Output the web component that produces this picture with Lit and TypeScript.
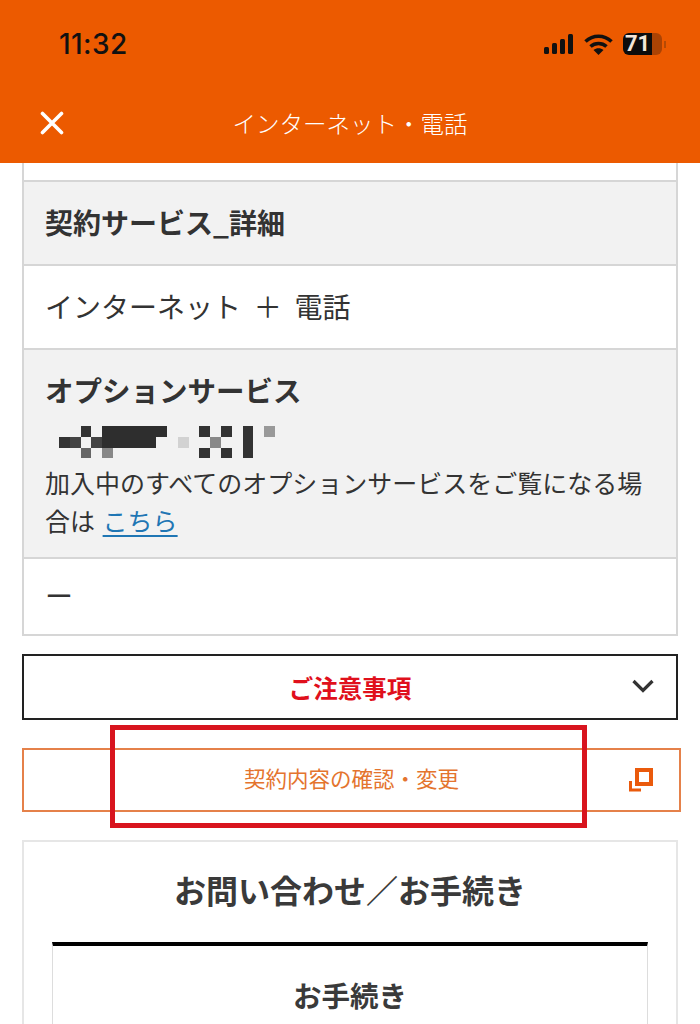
import { LitElement, css, html } from 'lit';
import { customElement } from 'lit/decorators.js';

// mosaic cells of the censored option text: [row, col, colour]
const MOSAIC: [number, number, string][] = [
  [0, 2, '#333'],
  ...[4, 5, 6, 7, 8, 9].map((c) => [0, c, '#2e2e2e'] as [number, number, string]),
  [0, 13, '#333'],
  [0, 15, '#333'],
  [0, 17, '#333'],
  [0, 19, '#999'],
  [1, 0, '#333'],
  [1, 1, '#444'],
  [1, 3, '#444'],
  ...[4, 5, 6, 7, 8].map((c) => [1, c, '#2e2e2e'] as [number, number, string]),
  [1, 11, '#d2d2d2'],
  [1, 14, '#888'],
  [1, 17, '#333'],
  [2, 2, '#666'],
  [2, 4, '#888'],
  [2, 13, '#333'],
  [2, 15, '#333'],
  [2, 17, '#333'],
];

@customElement('app-root')
export class AppRoot extends LitElement {
  render() {
    return html`
      <header class="top">
        <div class="status">
          <span class="time">11:32</span>
          <div class="status-icons">
            <svg width="30" height="20" viewBox="0 0 30 20" fill="#111">
              <rect x="0" y="13" width="5" height="7" rx="1.5"></rect>
              <rect x="8" y="9" width="5" height="11" rx="1.5"></rect>
              <rect x="16" y="5" width="5" height="15" rx="1.5"></rect>
              <rect x="24" y="0" width="5" height="20" rx="1.5"></rect>
            </svg>
            <svg width="29" height="21" viewBox="0 0 29 21" fill="none" stroke="#111" stroke-width="3.6">
              <path d="M1.5 7.5C9 .5 20 .5 27.5 7.5"></path>
              <path d="M6.5 12.5C11 8.5 18 8.5 22.5 12.5"></path>
              <path d="M14.5 21L9.5 16C12.5 13.5 16.5 13.5 19.5 16Z" fill="#111" stroke="none"></path>
            </svg>
            <div class="battery">
              <div class="battery-fill"><span>71</span></div>
              <div class="battery-rest"></div>
              <div class="battery-nub"></div>
            </div>
          </div>
        </div>
        <div class="nav">
          <svg class="close" width="26" height="24" viewBox="0 0 26 24" stroke="#fff" stroke-width="3.6" stroke-linecap="round">
            <path d="M3.5 2.5L22.5 21.5M22.5 2.5L3.5 21.5"></path>
          </svg>
          <span class="nav-title">インターネット・電話</span>
        </div>
      </header>

      <main class="page">
        <section class="table">
          <div class="row stub"></div>
          <div class="row head"><h3>契約サービス_詳細</h3></div>
          <div class="row cell">インターネット ＋ 電話</div>
          <div class="row head options">
            <h3>オプションサービス</h3>
            <div class="mosaic">
              ${MOSAIC.map(
                ([r, c, color]) => html`<i style="grid-row:${r + 1};grid-column:${c + 1};background:${color}"></i>`,
              )}
            </div>
            <p>加入中のすべてのオプションサービスをご覧になる場合は <a href="#">こちら</a></p>
          </div>
          <div class="row cell dash">ー</div>
        </section>

        <button class="notice">
          <span>ご注意事項</span>
          <svg class="chevron" width="22" height="14" viewBox="0 0 22 14" fill="none" stroke="#333" stroke-width="3.2">
            <path d="M1.5 2L11 11.5L20.5 2"></path>
          </svg>
        </button>

        <button class="confirm">
          <span>契約内容の確認・変更</span>
          <svg class="ext" width="25" height="24" viewBox="0 0 25 24" fill="none" stroke="#ea5a0c">
            <rect x="8" y="2" width="14" height="14" stroke-width="4"></rect>
            <path d="M1.5 13V22H12" stroke-width="3"></path>
          </svg>
        </button>

        <section class="card">
          <h2>お問い合わせ／お手続き</h2>
          <div class="tab"><h4>お手続き</h4></div>
        </section>
      </main>

      <div class="highlight"></div>
    `;
  }

  static styles = css`
    :host {
      display: block;
      position: relative;
      width: 700px;
      height: 1024px;
      overflow: hidden;
      background: #fff;
      color: #333;
      font-family: 'Noto Sans CJK JP', 'Liberation Sans', sans-serif;
    }

    h2, h3, h4, p {
      margin: 0;
    }

    .top {
      height: 163px;
      background: #ec5a00;
      display: flex;
      flex-direction: column;
    }

    .status {
      height: 88px;
      padding: 0 34px 0 59px;
      display: flex;
      align-items: center;
      justify-content: space-between;
    }

    .time {
      font-family: Inter, 'Liberation Sans', sans-serif;
      font-size: 28px;
      font-weight: 500;
      letter-spacing: 0.4px;
      color: #111;
    }

    .status-icons {
      display: flex;
      align-items: center;
      gap: 10px;
    }

    .battery {
      display: flex;
      align-items: center;
      height: 22px;
    }

    .battery-fill {
      width: 29px;
      height: 22px;
      background: #0c0c0c;
      border-radius: 6px 0 0 6px;
      color: #f3e6d8;
      font-family: Roboto, sans-serif;
      font-size: 22px;
      font-weight: 700;
      line-height: 22px;
      text-align: center;
      white-space: nowrap;
    }

    .battery-rest {
      width: 10px;
      height: 22px;
      background: #ab4304;
      border-radius: 0 6px 6px 0;
    }

    .battery-nub {
      width: 2px;
      height: 7px;
      margin-left: 2px;
      background: #b64a04;
    }

    .nav {
      flex: 1;
      position: relative;
      display: flex;
      align-items: flex-start;
      justify-content: center;
      padding-top: 17px;
    }

    .close {
      position: absolute;
      left: 39px;
      top: 23px;
    }

    .nav-title {
      color: #fff;
      font-size: 23.5px;
      font-weight: 300;
      line-height: 36px;
    }

    .page {
      padding: 0 22px;
    }

    .table {
      border: 2px solid #d6d6d6;
      border-top: 0;
    }

    .row {
      border-bottom: 2px solid #d6d6d6;
      padding: 0 21px;
      font-size: 28px;
    }

    .row:last-child {
      border-bottom: 0;
    }

    .stub {
      height: 17px;
    }

    .head {
      background: #f2f2f2;
      height: 84px;
      box-sizing: border-box;
      padding-bottom: 2px;
      display: flex;
      align-items: center;
    }

    .head h3 {
      font-size: 28px;
      font-weight: 700;
      line-height: 40px;
    }

    .cell {
      height: 84px;
      box-sizing: border-box;
      padding-bottom: 3px;
      display: flex;
      align-items: center;
      word-spacing: 6.5px;
    }

    .options {
      display: block;
      box-sizing: content-box;
      padding-top: 20px;
      padding-bottom: 0;
      height: 187px;
    }

    .options h3 {
      font-size: 28.5px;
    }

    .mosaic {
      display: grid;
      grid-template-columns: repeat(20, 10.8px);
      grid-template-rows: repeat(3, 10.8px);
      margin: 16px 0 0 14px;
    }

    .options p {
      font-size: 25px;
      line-height: 38px;
      margin-top: 5px;
    }

    .options a {
      color: #1f76b4;
      text-decoration: underline;
      text-underline-offset: 4px;
      margin-left: 2px;
    }

    .dash {
      height: 75px;
    }

    button {
      display: flex;
      align-items: center;
      justify-content: center;
      position: relative;
      box-sizing: border-box;
      background: #fff;
      font-family: inherit;
      padding: 0;
    }

    .notice {
      width: 656px;
      height: 66px;
      margin-top: 18px;
      border: 2px solid #222;
      color: #e0101c;
      font-size: 24.5px;
      font-weight: 700;
    }

    .chevron {
      position: absolute;
      right: 22px;
      top: 23px;
    }

    .confirm {
      width: 659px;
      height: 64px;
      margin-top: 28px;
      padding-bottom: 5px;
      border: 2px solid #e5814a;
      color: #e4742e;
      font-size: 21.5px;
    }

    .ext {
      position: absolute;
      left: 605px;
      top: 18px;
    }

    .card {
      margin-top: 28px;
      width: 656px;
      box-sizing: border-box;
      height: 300px;
      border: 2px solid #e6e6e6;
      padding: 24px 28px 0;
    }

    .card h2 {
      font-size: 32px;
      font-weight: 700;
      line-height: 46px;
      text-align: center;
      color: #3a3a3a;
    }

    .tab {
      margin-top: 30px;
      border: 1px solid #ddd;
      border-top: 4px solid #000;
      padding-top: 28px;
      height: 200px;
    }

    .tab h4 {
      font-size: 28.5px;
      font-weight: 700;
      line-height: 42px;
      text-align: center;
      color: #3a3a3a;
    }

    .highlight {
      position: absolute;
      left: 110px;
      top: 725px;
      width: 477px;
      height: 103px;
      box-sizing: border-box;
      border: 5px solid #d8141e;
    }
  `;
}
